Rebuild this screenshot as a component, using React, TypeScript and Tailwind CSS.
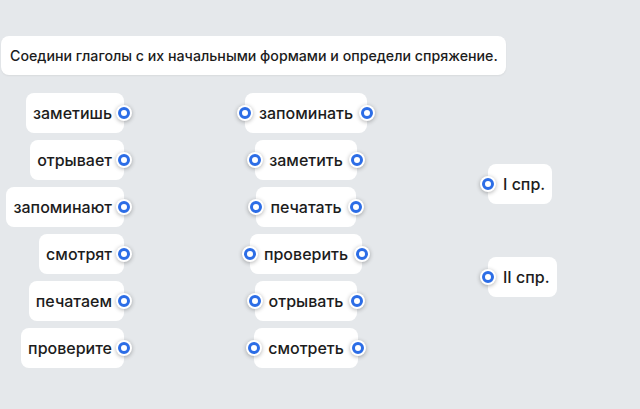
import React from "react";

const left = ["заметишь", "отрывает", "запоминают", "смотрят", "печатаем", "проверите"];
const middle = ["запоминать", "заметить", "печатать", "проверить", "отрывать", "смотреть"];

function Dot({ className = "" }: { className?: string }) {
  return (
    <span
      className={`relative z-10 flex h-4 w-4 shrink-0 items-center justify-center rounded-full bg-white shadow-[0_1px_4px_rgba(0,0,0,0.3)] ${className}`}
    >
      <span className="h-3 w-3 rounded-full border-[3.5px] border-[#2c6de6]" />
    </span>
  );
}

export default function App() {
  return (
    <div
      className="h-[409px] w-[640px] overflow-hidden bg-[#e5e8eb] pt-[36px] text-[#1c1c1c]"
      style={{ fontFamily: 'Inter, "Noto Sans", sans-serif' }}
    >
      <div className="ml-[1px] flex h-[39px] w-[505px] items-center whitespace-nowrap rounded-lg bg-white pl-[9px] text-[14.2px] font-medium shadow-[0_1px_2px_rgba(0,0,0,0.06)]">
        Соедини глаголы с их начальными формами и определи спряжение.
      </div>

      <div className="mt-[18px] flex items-start">
        {/* verbs */}
        <div className="flex w-[132px] flex-col items-end gap-[7px]">
          {left.map((w) => (
            <div key={w} className="flex h-10 items-center">
              <div className="flex h-10 items-center whitespace-nowrap rounded-lg bg-white pl-[7px] pr-[12px] text-[16px] font-medium">
                {w}
              </div>
              <Dot className="-ml-2" />
            </div>
          ))}
        </div>

        {/* initial forms */}
        <div className="ml-[100px] flex w-[148px] flex-col items-center gap-[7px]">
          {middle.map((w) => (
            <div key={w} className="flex h-10 items-center">
              <Dot />
              <div className="-ml-2 flex h-10 items-center whitespace-nowrap rounded-lg bg-white px-[14px] text-[16px] font-medium">
                {w}
              </div>
              <Dot className="-ml-2" />
            </div>
          ))}
        </div>

        {/* conjugations */}
        <div className="ml-[100px] mt-[71px] flex flex-col gap-[53px]">
          {["I спр.", "II спр."].map((w) => (
            <div key={w} className="flex h-10 items-center">
              <Dot />
              <div className="-ml-2 flex h-10 items-center whitespace-nowrap rounded-lg bg-white pl-[15px] pr-[7px] text-[16px] font-medium">
                {w}
              </div>
            </div>
          ))}
        </div>
      </div>
    </div>
  );
}
